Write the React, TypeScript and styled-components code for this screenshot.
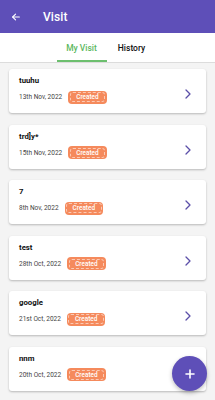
import React from 'react';
import styled, { createGlobalStyle } from 'styled-components';

const GlobalStyle = createGlobalStyle`
    html, body {
        margin: 0;
        padding: 0;
        background: #f4f4f4;
        font-family: Roboto, 'Noto Sans', sans-serif;
    }
`;

const visits = [
    { name: 'tuuhu', date: '13th Nov, 2022' },
    { name: 'trd]y*', date: '15th Nov, 2022' },
    { name: '7', date: '8th Nov, 2022' },
    { name: 'test', date: '28th Oct, 2022' },
    { name: 'google', date: '21st Oct, 2022' },
    { name: 'nnm', date: '20th Oct, 2022' },
];

const App = () => {
    return (
        <Screen>
            <GlobalStyle />
            <Header>
                <BackButton>
                    <svg width="10" height="10" viewBox="0 0 24 24" fill="none" stroke="#fff" strokeWidth="2.6" strokeLinecap="round" strokeLinejoin="round">
                        <path d="M20 12H4" />
                        <path d="M11 5l-7 7 7 7" />
                    </svg>
                </BackButton>
                <Title>Visit</Title>
            </Header>
            <Tabs>
                <Tab active>My Visit</Tab>
                <Tab>History</Tab>
            </Tabs>
            <List>
                {visits.map((v) => (
                    <Card key={v.name}>
                        <Info>
                            <Name>{v.name}</Name>
                            <Meta>
                                <DateText>{v.date}</DateText>
                                <Badge>Created</Badge>
                            </Meta>
                        </Info>
                        <svg width="6" height="10" viewBox="0 0 6 10" fill="none" stroke="#5b4fa8" strokeWidth="1.3" strokeLinecap="round" strokeLinejoin="round">
                            <path d="M1 1l4 4-4 4" />
                        </svg>
                    </Card>
                ))}
            </List>
            <Fab>
                <svg width="10" height="10" viewBox="0 0 10 10" stroke="#fff" strokeWidth="1.6" strokeLinecap="round">
                    <path d="M5 1v8M1 5h8" />
                </svg>
            </Fab>
        </Screen>
    );
};

export default App;

const Screen = styled.div`
    position: relative;
    width: 215px;
    height: 400px;
    overflow: hidden;
    background: #f4f4f4;
`;

const Header = styled.div`
    height: 33px;
    background: #5e4fb8;
    display: flex;
    align-items: center;
    padding-left: 11px;
    box-sizing: border-box;
`;

const BackButton = styled.div`
    width: 10px;
    height: 10px;
    display: flex;
    margin-right: 22px;
`;

const Title = styled.span`
    color: #fff;
    font-size: 12px;
    font-weight: 500;
    letter-spacing: 0.1px;
`;

const Tabs = styled.div`
    height: 30px;
    background: #fff;
    border-bottom: 1px solid #dcdcdc;
    display: flex;
    justify-content: center;
    box-sizing: border-box;
    padding-right: 2px;
`;

const Tab = styled.div<{ active?: boolean }>`
    width: 50px;
    display: flex;
    align-items: center;
    justify-content: center;
    font-size: 8.5px;
    font-weight: 500;
    color: ${(p) => (p.active ? '#5cb860' : '#111')};
    border-bottom: 2px solid ${(p) => (p.active ? '#6cbf6e' : 'transparent')};
    box-sizing: border-box;
    padding-top: 2px;
`;

const List = styled.div`
    display: flex;
    flex-direction: column;
    gap: 11.6px;
    padding: 6px 9px 0;
`;

const Card = styled.div`
    background: #fff;
    border-radius: 3px;
    box-shadow: 0 1px 2px rgba(0, 0, 0, 0.18), 0 1px 3px rgba(0, 0, 0, 0.08);
    height: 44px;
    box-sizing: border-box;
    padding: 6px 15px 0 10px;
    display: flex;
    align-items: center;
    justify-content: space-between;
`;

const Info = styled.div`
    display: flex;
    flex-direction: column;
    align-self: flex-start;
`;

const Name = styled.div`
    font-size: 7.8px;
    font-weight: 700;
    color: #111;
    line-height: 12px;
`;

const Meta = styled.div`
    display: flex;
    align-items: center;
    margin-top: 3.5px;
`;

const DateText = styled.span`
    font-size: 6.5px;
    color: #444;
    margin-right: 6px;
`;

const Badge = styled.span`
    height: 13px;
    padding: 0 8px;
    background: #f58a5c;
    border-radius: 4px;
    color: #fff;
    font-size: 6.4px;
    font-weight: 500;
    display: flex;
    align-items: center;
    box-sizing: border-box;
    position: relative;

    &::after {
        content: '';
        position: absolute;
        inset: 1.5px;
        border: 1px dashed rgba(255, 255, 255, 0.55);
        border-radius: 3px;
    }
`;

const Fab = styled.div`
    position: absolute;
    right: 8px;
    bottom: 9px;
    width: 35px;
    height: 35px;
    border-radius: 50%;
    background: #5e4fb8;
    box-shadow: 0 2px 4px rgba(0, 0, 0, 0.25);
    display: flex;
    align-items: center;
    justify-content: center;
`;
